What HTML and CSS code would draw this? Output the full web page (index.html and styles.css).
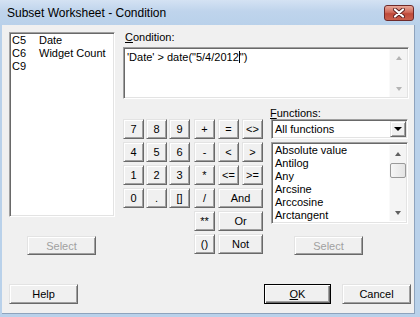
FILE: index.html
```html
<!DOCTYPE html>
<html lang="en">
<head>
    <meta charset="UTF-8">
    <meta name="viewport" content="width=device-width, initial-scale=1.0">
    <title>Subset Worksheet - Condition</title>
    <link rel="stylesheet" href="styles.css">
</head>
<body>
    <div class="window">
        <div class="titlebar">
            <span class="title">Subset Worksheet - Condition</span>
            <span class="close">
                <svg width="12" height="10" viewBox="0 0 12 10">
                    <path d="M2 1.5 L10 8.5 M10 1.5 L2 8.5" stroke="#5a2020" stroke-width="4" stroke-linecap="round"/>
                    <path d="M2 1.5 L10 8.5 M10 1.5 L2 8.5" stroke="#fff" stroke-width="2.2" stroke-linecap="round"/>
                </svg>
            </span>
        </div>

        <div class="client">
            <div class="main">
                <div class="left-col">
                    <div class="listbox">
                        <div class="row"><span class="cid">C5</span><span>Date</span></div>
                        <div class="row"><span class="cid">C6</span><span>Widget Count</span></div>
                        <div class="row"><span class="cid">C9</span><span></span></div>
                    </div>
                    <button type="button" class="btn select" disabled>Select</button>
                </div>

                <div class="right-col">
                    <div class="label"><u>C</u>ondition:</div>
                    <div class="textbox">
                        <div class="text">'Date' &gt; date("5/4/2012<span class="caret"></span>")</div>
                        <div class="vscroll">
                            <div class="arrow"><span class="tri-up off"></span></div>
                            <div class="arrow"><span class="tri-down off"></span></div>
                        </div>
                    </div>

                    <div class="lower">
                        <div class="pad">
                            <div class="numpad">
                                <button type="button" class="btn key">7</button>
                                <button type="button" class="btn key">8</button>
                                <button type="button" class="btn key">9</button>
                                <button type="button" class="btn key">4</button>
                                <button type="button" class="btn key">5</button>
                                <button type="button" class="btn key">6</button>
                                <button type="button" class="btn key">1</button>
                                <button type="button" class="btn key">2</button>
                                <button type="button" class="btn key">3</button>
                                <button type="button" class="btn key">0</button>
                                <button type="button" class="btn key">.</button>
                                <button type="button" class="btn key">[]</button>
                            </div>
                            <div class="ops">
                                <button type="button" class="btn key">+</button>
                                <button type="button" class="btn key">=</button>
                                <button type="button" class="btn key">&lt;&gt;</button>
                                <button type="button" class="btn key">-</button>
                                <button type="button" class="btn key">&lt;</button>
                                <button type="button" class="btn key">&gt;</button>
                                <button type="button" class="btn key">*</button>
                                <button type="button" class="btn key">&lt;=</button>
                                <button type="button" class="btn key">&gt;=</button>
                                <button type="button" class="btn key">/</button>
                                <button type="button" class="btn key span2">And</button>
                                <button type="button" class="btn key">**</button>
                                <button type="button" class="btn key span2">Or</button>
                                <button type="button" class="btn key">()</button>
                                <button type="button" class="btn key span2">Not</button>
                            </div>
                        </div>

                        <div class="functions">
                            <div class="label flabel"><u>F</u>unctions:</div>
                            <div class="combo">
                                <span class="combo-text">All functions</span>
                                <span class="combo-btn"><span class="tri-down dark"></span></span>
                            </div>
                            <div class="flist">
                                <div class="items">
                                    <div class="row">Absolute value</div>
                                    <div class="row">Antilog</div>
                                    <div class="row">Any</div>
                                    <div class="row">Arcsine</div>
                                    <div class="row">Arccosine</div>
                                    <div class="row">Arctangent</div>
                                </div>
                                <div class="vscroll">
                                    <div class="arrow"><span class="tri-up"></span></div>
                                    <div class="thumb"></div>
                                    <div class="arrow push"><span class="tri-down"></span></div>
                                </div>
                            </div>
                            <button type="button" class="btn select fselect" disabled>Select</button>
                        </div>
                    </div>
                </div>
            </div>

            <div class="bottom">
                <button type="button" class="btn wide">Help</button>
                <button type="button" class="btn wide ok"><u>O</u>K</button>
                <button type="button" class="btn wide cancel">Cancel</button>
            </div>
        </div>
    </div>
</body>
</html>
```

FILE: styles.css
```css
body {
    margin: 0;
}
.window {
    width: 420px;
    height: 317px;
    display: flex;
    flex-direction: column;
    background: #b9d1ea;
    font-family: "Liberation Sans", Arial, sans-serif;
    font-size: 11px;
    color: #000;
}
.titlebar {
    height: 25px;
    flex: none;
    display: flex;
    justify-content: space-between;
    padding: 0 6px 0 7px;
    background: linear-gradient(#d4e2f3, #bfd4ec 45%, #b9d1ea);
}
.title {
    font-size: 12px;
    line-height: 27px;
}
.close {
    width: 30px;
    height: 16px;
    margin-top: 5px;
    box-sizing: border-box;
    border: 1px solid #6e2a2a;
    border-radius: 3px;
    background: linear-gradient(#e9a99b, #d06a5a 45%, #bf4a3a 55%, #c9604d);
    display: flex;
    align-items: center;
    justify-content: center;
}
.client {
    flex: 1;
    margin: 0 5px 3px 2px;
    background: #f0f0f0;
    border-right: 1px solid #8ea3bd;
    border-bottom: 1px solid #8ea3bd;
    display: flex;
    flex-direction: column;
}
.main {
    display: flex;
    padding: 6px 0 0 7px;
}
.left-col {
    width: 106px;
    display: flex;
    flex-direction: column;
}
.listbox, .textbox, .combo, .flist {
    box-sizing: border-box;
    background: #fff;
    border: 1px solid;
    border-color: #a0a0a0 #fff #fff #a0a0a0;
    box-shadow: inset 1px 1px #696969, inset -1px -1px #e3e3e3;
}
.listbox {
    margin-top: 1px;
    height: 185px;
    padding: 1px 2px;
}
.row {
    display: flex;
    height: 13px;
    line-height: 13px;
    white-space: nowrap;
}
.cid {
    width: 27px;
}
.btn {
    box-sizing: border-box;
    padding: 0;
    font: inherit;
    color: #000;
    background: #f0f0f0;
    border: 1px solid;
    border-color: #e3e3e3 #696969 #696969 #e3e3e3;
    box-shadow: inset 1px 1px #fff, inset -1px -1px #a0a0a0;
}
.select {
    width: 69px;
    height: 19px;
    color: #a0a0a0;
}
.left-col .select {
    margin: 19px 0 0 18px;
}
.right-col {
    margin-left: 8px;
    width: 286px;
}
.label {
    line-height: 13px;
    padding-left: 2px;
    margin-bottom: 3px;
}
.textbox {
    height: 52px;
    display: flex;
    padding: 1px;
}
.text {
    flex: 1;
    padding: 2px 2px;
    line-height: 13px;
}
.caret {
    display: inline-block;
    width: 1px;
    height: 12px;
    background: #000;
    vertical-align: -2px;
}
.vscroll {
    width: 17px;
    display: flex;
    flex-direction: column;
    justify-content: space-between;
    background: #f4f4f4;
    border-left: 1px solid #fafafa;
}
.arrow {
    height: 17px;
    display: flex;
    align-items: center;
    justify-content: center;
}
.push {
    margin-top: auto;
}
.tri-up, .tri-down {
    width: 0;
    height: 0;
    border-left: 3.5px solid transparent;
    border-right: 3.5px solid transparent;
}
.tri-up {
    border-bottom: 4px solid #606060;
}
.tri-down {
    border-top: 4px solid #606060;
}
.tri-up.off {
    border-bottom-color: #b4b4b4;
}
.tri-down.off {
    border-top-color: #b4b4b4;
}
.tri-down.dark {
    border-left-width: 4px;
    border-right-width: 4px;
    border-top: 4px solid #000;
}
.lower {
    display: flex;
    margin-top: 8px;
}
.pad {
    display: flex;
    gap: 4px;
    padding-top: 12px;
}
.numpad, .ops {
    display: grid;
    grid-template-columns: repeat(3, 21px);
    grid-auto-rows: 20px;
    align-content: start;
}
.numpad {
    gap: 3px 2px;
}
.ops {
    gap: 3px;
}
.span2 {
    grid-column: span 2;
}
.functions {
    margin-left: 8px;
    width: 137px;
    display: flex;
    flex-direction: column;
}
.flabel {
    line-height: 12px;
    margin-bottom: 0;
    padding-left: 0;
    margin-left: -1px;
}
.combo {
    height: 20px;
    display: flex;
    align-items: center;
    padding: 2px 1px 2px 2px;
}
.combo-text {
    flex: 1;
    padding-left: 1px;
}
.combo-btn {
    width: 16px;
    height: 16px;
    box-sizing: border-box;
    display: flex;
    align-items: center;
    justify-content: center;
    background: #f0f0f0;
    border: 1px solid;
    border-color: #e3e3e3 #696969 #696969 #e3e3e3;
    box-shadow: inset 1px 1px #fff, inset -1px -1px #a0a0a0;
}
.flist {
    margin-top: 3px;
    height: 82px;
    display: flex;
    padding: 1px 1px 0 2px;
}
.items {
    flex: 1;
    padding: 0 1px;
    overflow: hidden;
}
.flist .vscroll {
    width: 16px;
    justify-content: flex-start;
    margin: 1px 0 2px;
}
.thumb {
    margin: 1px 0 0 0;
    height: 15px;
    box-sizing: border-box;
    border: 1px solid #9a9a9a;
    border-radius: 2px;
    background: linear-gradient(to right, #f6f6f6, #e4e4e4);
}
.fselect {
    margin: 12px 0 0 23px;
}
.bottom {
    margin-top: auto;
    display: flex;
    padding: 0 3px 9px 7px;
}
.wide {
    width: 69px;
    height: 20px;
}
.ok {
    margin-left: auto;
    width: 67px;
    border-color: #000;
    box-shadow: inset 1px 1px #fff, inset -1px -1px #696969, inset -2px -2px #a0a0a0;
}
.cancel {
    margin-left: 11px;
}
```
